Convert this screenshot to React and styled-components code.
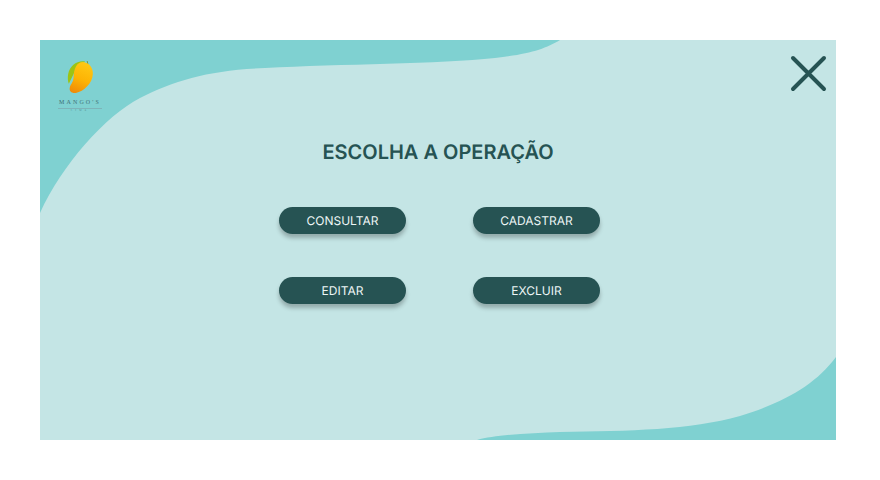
import React from "react";
import styled, { createGlobalStyle } from "styled-components";

const GlobalStyle = createGlobalStyle`
  html, body {
    margin: 0;
    padding: 0;
    background: #fff;
  }
`;

const Page = styled.div`
  width: 880px;
  height: 480px;
  padding: 40px 44px 40px 40px;
  box-sizing: border-box;
`;

const Frame = styled.main`
  position: relative;
  width: 796px;
  height: 400px;
  overflow: hidden;
  background: #c4e5e5;
  font-family: Inter, "Liberation Sans", sans-serif;
  text-rendering: geometricPrecision;
`;

const Waves = styled.svg`
  position: absolute;
  inset: 0;
  width: 796px;
  height: 400px;
`;

const Content = styled.div`
  position: relative;
  display: flex;
  flex-direction: column;
`;

const Header = styled.header`
  display: flex;
  justify-content: space-between;
  align-items: flex-start;
  box-sizing: border-box;
  height: 72px;
  padding: 15px 8px 0 18px;
`;

const Logo = styled.div`
  display: flex;
  flex-direction: column;
  align-items: center;
  width: 44px;
  margin-top: 4px;
`;

const LogoName = styled.span`
  width: 100%;
  margin-top: 6px;
  padding-bottom: 1px;
  border-bottom: 1px solid #7db4b9;
  font-family: "Liberation Serif", serif;
  font-size: 6px;
  line-height: 7px;
  letter-spacing: 2.1px;
  white-space: nowrap;
  text-align: center;
  color: #3f7379;
`;

const LogoSub = styled.span`
  font-family: "Liberation Serif", serif;
  font-size: 2.5px;
  line-height: 4px;
  letter-spacing: 3px;
  color: #4d8288;
`;

const CloseButton = styled.button`
  display: flex;
  width: 38px;
  height: 38px;
  padding: 0;
  border: 0;
  background: none;
`;

const Title = styled.h1`
  margin: 28px 0 0;
  font-size: 20px;
  line-height: 24px;
  font-weight: 600;
  text-align: center;
  color: #265353;
`;

const Actions = styled.div`
  display: grid;
  grid-template-columns: 127px 127px;
  grid-auto-rows: 27px;
  column-gap: 67px;
  row-gap: 43px;
  justify-content: center;
  margin-top: 43px;
  padding-left: 3px;
`;

const Action = styled.button`
  border: 0;
  border-radius: 14px;
  background: #265353;
  box-shadow: 0 4px 4px rgba(0, 0, 0, 0.25);
  font-family: inherit;
  font-size: 12px;
  color: #eef6f6;
  text-rendering: geometricPrecision;
`;

const operations = ["CONSULTAR", "CADASTRAR", "EDITAR", "EXCLUIR"];

const MangoIcon = () => (
  <svg width="27" height="35" viewBox="80 55 80 105">
    <defs>
      <linearGradient id="mangoFill" x1="0.6" y1="0" x2="0.3" y2="1">
        <stop offset="0" stopColor="#ffc814" />
        <stop offset="0.55" stopColor="#fdb304" />
        <stop offset="1" stopColor="#f08c08" />
      </linearGradient>
    </defs>
    <path d="M142 70 L140 61" stroke="#6f8a3a" strokeWidth="2.5" fill="none" />
    <path d="M134 62 C110 58 88 74 83 100 C81 112 82 122 85 129 L104 90 Z" fill="#9cc414" />
    <path
      d="M128 64 C145 66 158 80 157 100 C156 128 130 152 106 157 C94 159 85 152 88 140 C90 130 98 126 99 112 C100 84 108 64 128 64 Z"
      fill="url(#mangoFill)"
    />
  </svg>
);

const CloseIcon = () => (
  <svg width="38" height="38" viewBox="0 0 38 38">
    <path
      d="M3 3 L34 34 M34 3 L3 34"
      stroke="#265353"
      strokeWidth="4"
      strokeLinecap="round"
      fill="none"
    />
  </svg>
);

const App = () => (
  <>
    <GlobalStyle />
    <Page>
      <Frame>
        <Waves viewBox="0 0 796 400">
          <path
            d="M0 0 H520 C505 9 490 14 455 18 C400 24 300 24 225 28 C170 30 135 40 100 58 C65 76 22 125 0 173 Z"
            fill="#7fd1d1"
          />
          <path
            d="M796 317 C775 345 745 362 700 376 C650 390 590 391 520 392 C490 393 455 395 437 400 H796 Z"
            fill="#7fd1d1"
          />
        </Waves>
        <Content>
          <Header>
            <Logo>
              <MangoIcon />
              <LogoName>MANGO'S</LogoName>
              <LogoSub>LIMA</LogoSub>
            </Logo>
            <CloseButton aria-label="Fechar">
              <CloseIcon />
            </CloseButton>
          </Header>
          <Title>ESCOLHA A OPERAÇÃO</Title>
          <Actions>
            {operations.map((label) => (
              <Action key={label}>{label}</Action>
            ))}
          </Actions>
        </Content>
      </Frame>
    </Page>
  </>
);

export default App;
